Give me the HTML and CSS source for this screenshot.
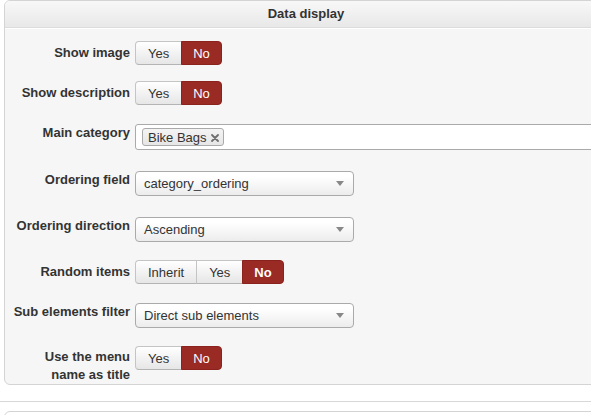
FILE: index.html
```html
<!DOCTYPE html>
<html>
<head>
<meta charset="utf-8">
<link rel="stylesheet" href="styles.css">
</head>
<body>
<div class="panel">
  <div class="panel-head">Data display</div>
  <div class="panel-body">
    <div class="row gap-16">
      <div class="label lbl-btn">Show image</div>
      <div class="btn-group">
        <span class="btn">Yes</span><span class="btn active">No</span>
      </div>
    </div>
    <div class="row gap-19">
      <div class="label lbl-btn">Show description</div>
      <div class="btn-group">
        <span class="btn">Yes</span><span class="btn active">No</span>
      </div>
    </div>
    <div class="row gap-21">
      <div class="label">Main category</div>
      <div class="tag-input">
        <span class="tag">Bike Bags<svg class="tag-x" width="8" height="8" viewBox="0 0 8 8"><path d="M1 1L7 7M7 1L1 7" stroke="#6f6f6f" stroke-width="1.8" stroke-linecap="round"/></svg></span>
      </div>
    </div>
    <div class="row gap-21">
      <div class="label">Ordering field</div>
      <div class="select"><span>category_ordering</span><i class="caret"></i></div>
    </div>
    <div class="row gap-18">
      <div class="label">Ordering direction</div>
      <div class="select"><span>Ascending</span><i class="caret"></i></div>
    </div>
    <div class="row gap-19">
      <div class="label lbl-btn">Random items</div>
      <div class="btn-group">
        <span class="btn">Inherit</span><span class="btn">Yes</span><span class="btn active bold">No</span>
      </div>
    </div>
    <div class="row gap-18">
      <div class="label">Sub elements filter</div>
      <div class="select"><span>Direct sub elements</span><i class="caret"></i></div>
    </div>
    <div class="row">
      <div class="label lbl-btn2">Use the menu name as title</div>
      <div class="btn-group">
        <span class="btn">Yes</span><span class="btn active">No</span>
      </div>
    </div>
  </div>
</div>
<div class="rule"></div>
<div class="panel next"></div>
</body>
</html>
```

FILE: styles.css
```css
html, body {
  margin: 0;
  padding: 0;
  background: #fff;
  overflow: hidden;
}
body {
  font-family: "Liberation Sans", Arial, sans-serif;
  font-size: 13px;
  color: #333;
  width: 591px;
  height: 415px;
}
.panel {
  margin-left: 4px;
  width: 602px;
  border: 1px solid #d4d4d4;
  border-radius: 6px;
  background: #f6f6f6;
  overflow: hidden;
}
.panel-head {
  height: 26px;
  line-height: 26px;
  text-align: center;
  font-weight: bold;
  color: #333;
  background: linear-gradient(#f8f8f8, #e8e8e8);
  border-bottom: 1px solid #dcdcdc;
  box-shadow: 0 1px 0 #fff;
}
.panel-body {
  padding: 13px 10px 0 5px;
  display: flex;
  flex-direction: column;
}
.row {
  display: flex;
  align-items: flex-start;
  gap: 5px;
}
.gap-16 { margin-bottom: 16px; }
.gap-18 { margin-bottom: 18px; }
.gap-19 { margin-bottom: 19px; }
.gap-21 { margin-bottom: 21px; }
.label {
  width: 120px;
  flex: none;
  text-align: right;
  font-weight: bold;
  line-height: 18px;
  color: #333;
}
.lbl-btn { padding-top: 3px; }
.lbl-btn2 { padding-top: 2px; }
.btn-group {
  display: flex;
  height: 24px;
}
.btn {
  display: flex;
  align-items: center;
  padding: 0 12px;
  height: 22px;
  border: 1px solid #c4c4c4;
  border-bottom-color: #b4b4b4;
  background: linear-gradient(#ffffff, #e6e6e6);
  color: #333;
  margin-left: -1px;
}
.btn:first-child {
  margin-left: 0;
  border-radius: 4px 0 0 4px;
}
.btn:last-child {
  border-radius: 0 4px 4px 0;
}
.btn.active {
  background: #992a24;
  border-color: #8a231e;
  color: #fff;
  padding: 0 11px;
}
.btn.bold { font-weight: bold; }
.tag-input {
  flex: 1;
  height: 24px;
  border: 1px solid #aaa;
  border-radius: 3px 0 0 3px;
  background: #fff;
  display: flex;
  align-items: center;
  padding-left: 6px;
}
.tag {
  display: flex;
  align-items: center;
  gap: 4px;
  height: 16px;
  padding: 0 4px 0 5px;
  border: 1px solid #aaa;
  border-radius: 3px;
  background: linear-gradient(#f4f4f4, #e6e6e6);
  color: #333;
}
.tag-x { display: block; margin-top: 1px; }
.select {
  width: 201px;
  height: 23px;
  border: 1px solid #aaa;
  border-radius: 4px;
  background: linear-gradient(#ffffff 20%, #ececec);
  display: flex;
  align-items: center;
  justify-content: space-between;
  padding: 0 8px 0 8px;
  color: #333;
}
.caret {
  width: 0;
  height: 0;
  border-left: 4px solid transparent;
  border-right: 4px solid transparent;
  border-top: 5px solid #888;
  margin-right: 1px;
}
.rule {
  margin-top: 16px;
  height: 1px;
  background: #d8d8d8;
}
.panel.next {
  margin-top: 9px;
  height: 20px;
  background: #fff;
}
```
